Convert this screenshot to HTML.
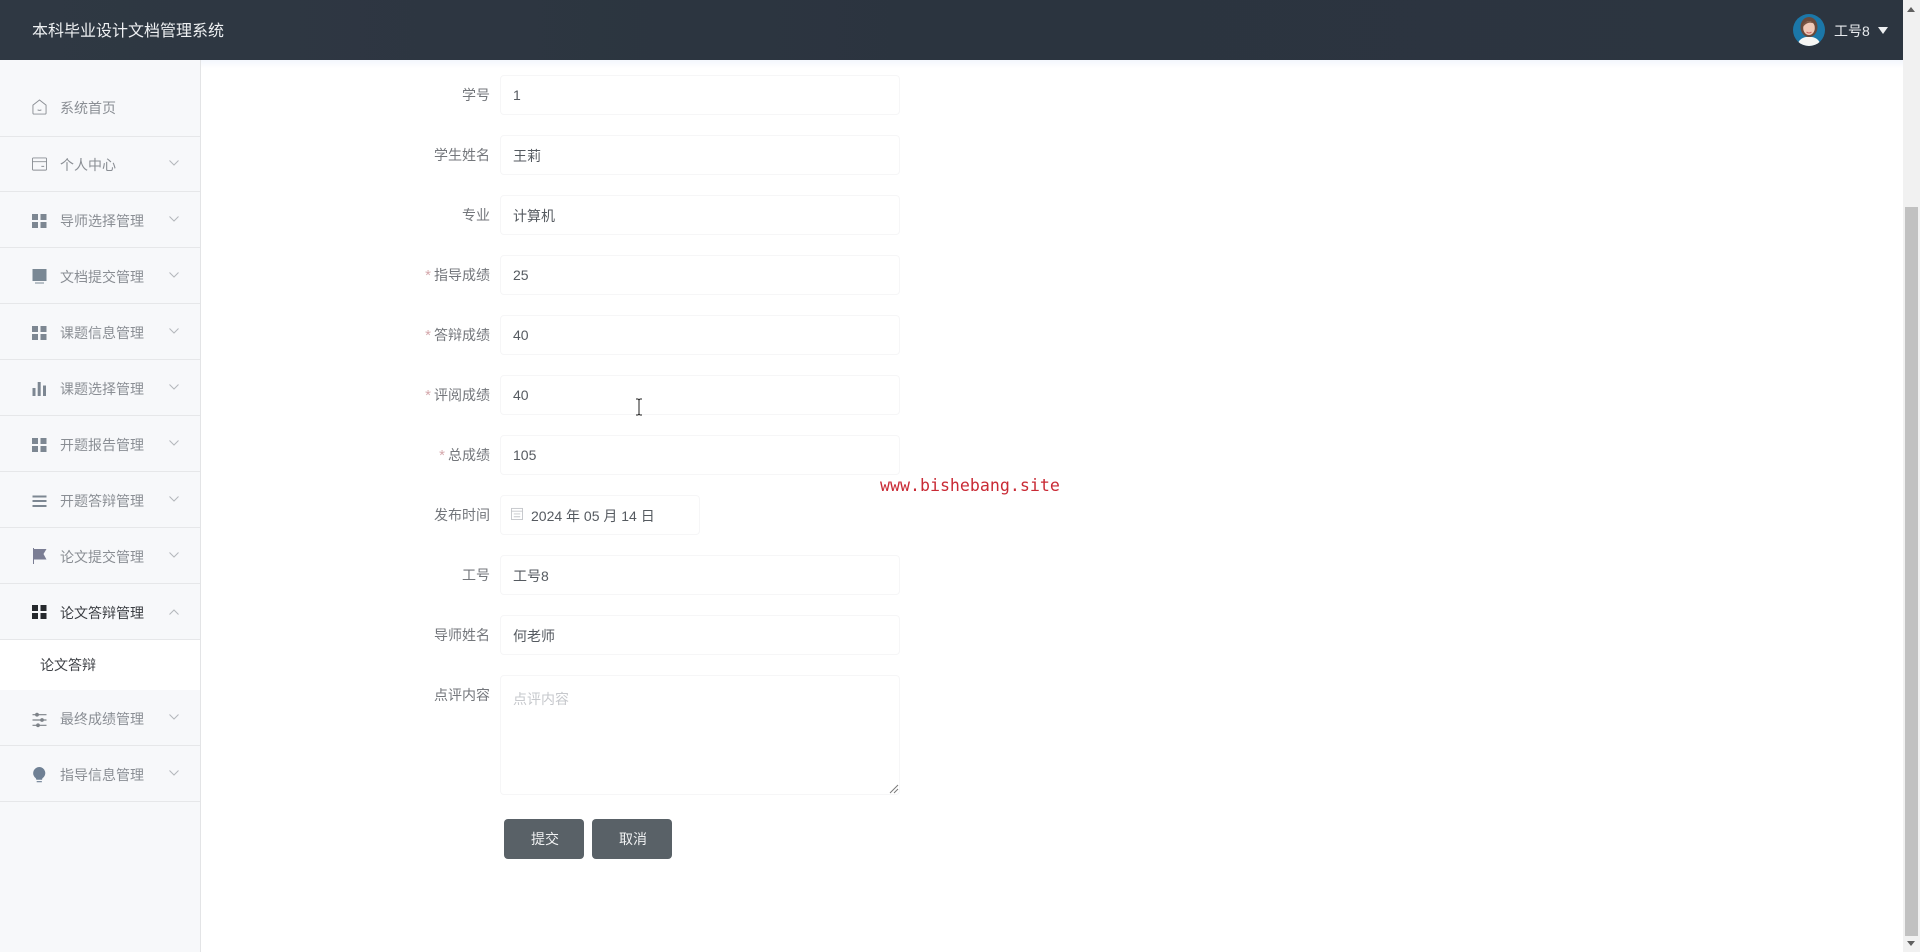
<!DOCTYPE html>
<html lang="zh-CN">
<head>
<meta charset="utf-8">
<title>本科毕业设计文档管理系统</title>
<style>
*{box-sizing:border-box;margin:0;padding:0}
html,body{width:1920px;height:952px;overflow:hidden;background:#fff;font-family:"Liberation Sans","Noto Sans CJK SC",sans-serif}
#wrap{position:absolute;left:0;top:0;width:1920px;height:952px;overflow:hidden;filter:blur(.35px)}
.a{position:absolute}
#header{left:0;top:0;width:1903px;height:60px;background:#2c3540;background:linear-gradient(90deg,#2f3843,#2b343f 50%,#2c3540)}
#title{left:32px;top:20px;font-size:16px;line-height:24px;color:#eef0f2;white-space:nowrap}
#user{left:1834px;top:21px;font-size:14px;line-height:20px;color:#e8ebee;white-space:nowrap}
#caret{left:1878px;top:27px;width:0;height:0;border-left:5.5px solid transparent;border-right:5.5px solid transparent;border-top:7px solid #eef0f2}
#shadow{left:201px;top:60px;width:1702px;height:8px;background:linear-gradient(#f3f7fd,#fff)}
#side{left:0;top:60px;width:201px;height:892px;background:#f7f8fa;border-right:1px solid #e3e4e6}
.sep{left:0;width:200px;height:1px;background:#e6e7e9}
#sub{left:0;top:640px;width:200px;height:50px;background:#fff}
.t{left:60px;font-size:14px;line-height:20px;color:#8a8e94;white-space:nowrap}
.c{left:169px;width:10px;height:6px}
.i{left:32px;width:15px;height:16px}
.lb{width:190px;left:300px;text-align:right;font-size:14px;line-height:20px;color:#73767b;white-space:nowrap}
.lb b{font-weight:400;font-size:15px;color:#d5a8ac;margin-right:3px}
.ip{left:500px;width:400px;height:40px;border:1px solid #f6f6f7;border-radius:4px;background:#fff;font-size:14px;line-height:38px;padding-left:12px;color:#555a60;white-space:nowrap}
.cn{padding-top:1px}
.btn{top:819px;width:80px;height:40px;background:#596167;border-radius:4px;color:#f0f1f2;font-size:14px;line-height:40px;text-align:center;padding-left:2px}
#wm{left:880px;top:475px;font-family:"DejaVu Sans Mono","Liberation Mono",monospace;font-size:16.6px;line-height:22px;color:#c92a35;white-space:nowrap}
#sb{left:1903px;top:0;width:17px;height:952px;background:#f1f1f1}
#thumb{left:1905px;top:207px;width:13px;height:729px;background:#c1c1c1}
</style>
</head>
<body>
<div id="wrap">
<div class="a" id="header"></div>
<div class="a" id="title">本科毕业设计文档管理系统</div>
<svg class="a" style="left:1793px;top:14px" width="32" height="32" viewBox="0 0 32 32">
  <defs><clipPath id="av"><circle cx="16" cy="16" r="16"/></clipPath></defs>
  <g clip-path="url(#av)">
    <rect width="32" height="32" fill="#1b77a8"/>
    <ellipse cx="16" cy="13" rx="8.5" ry="10" fill="#6a4a3c"/>
    <ellipse cx="16" cy="14" rx="5.8" ry="7" fill="#f0c9b8"/>
    <path d="M10 10 Q16 4 22 10 Q18 8 15 9 Q12 10 10 13Z" fill="#7a5644"/>
    <path d="M13.5 18Q16 20 18.5 18" stroke="#c9605f" fill="none"/>
    <path d="M4 32 Q6 24 13 23 L19 23 Q26 24 28 32Z" fill="#f6f6f4"/>
  </g>
</svg>
<div class="a" id="user">工号8</div>
<div class="a" id="caret"></div>
<div class="a" id="shadow"></div>

<div class="a" id="side"></div>
<div class="a" id="sub"></div>
<div class="a sep" style="top:136px"></div>
<div class="a sep" style="top:191px"></div>
<div class="a sep" style="top:247px"></div>
<div class="a sep" style="top:303px"></div>
<div class="a sep" style="top:359px"></div>
<div class="a sep" style="top:415px"></div>
<div class="a sep" style="top:471px"></div>
<div class="a sep" style="top:527px"></div>
<div class="a sep" style="top:583px"></div>
<div class="a sep" style="top:639px"></div>
<div class="a sep" style="top:745px"></div>
<div class="a sep" style="top:801px"></div>

<div class="a t" style="top:98px">系统首页</div>
<div class="a t" style="top:155px">个人中心</div>
<div class="a t" style="top:211px">导师选择管理</div>
<div class="a t" style="top:267px">文档提交管理</div>
<div class="a t" style="top:323px">课题信息管理</div>
<div class="a t" style="top:379px">课题选择管理</div>
<div class="a t" style="top:435px">开题报告管理</div>
<div class="a t" style="top:491px">开题答辩管理</div>
<div class="a t" style="top:547px">论文提交管理</div>
<div class="a t" style="top:603px;color:#3a3d42">论文答辩管理</div>
<div class="a t" style="top:655px;left:40px;color:#3f4247">论文答辩</div>
<div class="a t" style="top:709px">最终成绩管理</div>
<div class="a t" style="top:765px">指导信息管理</div>

<svg class="a i" style="top:99px" viewBox="0 0 16 17" fill="none" stroke="#8b8f95" stroke-width="1"><path d="M1 6.5 8 1l7 5.5V15a1 1 0 0 1-1 1H2a1 1 0 0 1-1-1Z"/><path d="M6 11.5q2 1.2 4 0"/></svg>
<svg class="a i" style="top:156px" viewBox="0 0 16 16" fill="none" stroke="#8b8f95" stroke-width="1"><rect x=".5" y="1.5" width="15" height="13" rx="1"/><path d="M.5 5.5h15M10 10.5h3"/></svg>
<svg class="a i" style="top:213px" viewBox="0 0 15 15" fill="#7d8792"><rect width="6" height="6" y=".5"/><rect x="8.5" y=".5" width="6" height="6"/><rect y="8.5" width="6" height="6"/><rect x="8.5" y="8.5" width="6" height="6"/></svg>
<svg class="a i" style="top:269px" viewBox="0 0 15 16" fill="#7a8894"><rect x=".5" width="14" height="12"/><rect x="3" y="13.5" width="9" height="1"/></svg>
<svg class="a i" style="top:325px" viewBox="0 0 15 15" fill="#7d8792"><rect width="6" height="6" y=".5"/><rect x="8.5" y=".5" width="6" height="6"/><rect y="8.5" width="6" height="6"/><rect x="8.5" y="8.5" width="6" height="6"/></svg>
<svg class="a i" style="top:381px" viewBox="0 0 15 15" fill="#7d8792"><rect x=".5" y="6.5" width="3" height="8"/><rect x="5.7" y=".5" width="3" height="14"/><rect x="11" y="4" width="3" height="10.5"/></svg>
<svg class="a i" style="top:437px" viewBox="0 0 15 15" fill="#7d8792"><rect width="6" height="6" y=".5"/><rect x="8.5" y=".5" width="6" height="6"/><rect y="8.5" width="6" height="6"/><rect x="8.5" y="8.5" width="6" height="6"/></svg>
<svg class="a i" style="top:493px" viewBox="0 0 15 15" fill="#7d8792"><rect x=".5" y="2" width="14" height="2"/><rect x=".5" y="6.5" width="14" height="2"/><rect x=".5" y="11.5" width="14" height="2"/></svg>
<svg class="a i" style="top:548px" viewBox="0 0 15 16" fill="#7b7e94"><rect x="1" y="0" width="1" height="16"/><path d="M2 1h12.5l-3 5 3 5.5H2Z"/></svg>
<svg class="a i" style="top:604px" viewBox="0 0 15 15" fill="#26292d"><rect width="6" height="6" y=".5"/><rect x="8.5" y=".5" width="6" height="6"/><rect y="8.5" width="6" height="6"/><rect x="8.5" y="8.5" width="6" height="6"/></svg>
<svg class="a i" style="top:712px" viewBox="0 0 15 15" fill="none" stroke="#7d8288" stroke-width="1.2"><path d="M.5 2.2h14M.5 7.5h14M.5 12.8h14"/><circle cx="5" cy="2.2" r="1.3" fill="#7d8288"/><circle cx="10" cy="7.5" r="1.3" fill="#7d8288"/><circle cx="6" cy="12.8" r="1.3" fill="#7d8288"/></svg>
<svg class="a i" style="top:767px" viewBox="0 0 15 17" fill="#6f8094"><path d="M7 0a6.5 6.5 0 0 1 3.6 12l-.4 1.5H4.2L3.6 12A6.6 6.6 0 0 1 7 0Z"/><rect x="4.5" y="15" width="5.5" height="1.2"/></svg>

<svg class="a c" style="top:160px" viewBox="0 0 10 6" fill="none" stroke="#b4b7bb"><path d="M.5.5 5 5 9.5.5"/></svg>
<svg class="a c" style="top:216px" viewBox="0 0 10 6" fill="none" stroke="#b4b7bb"><path d="M.5.5 5 5 9.5.5"/></svg>
<svg class="a c" style="top:272px" viewBox="0 0 10 6" fill="none" stroke="#b4b7bb"><path d="M.5.5 5 5 9.5.5"/></svg>
<svg class="a c" style="top:328px" viewBox="0 0 10 6" fill="none" stroke="#b4b7bb"><path d="M.5.5 5 5 9.5.5"/></svg>
<svg class="a c" style="top:384px" viewBox="0 0 10 6" fill="none" stroke="#b4b7bb"><path d="M.5.5 5 5 9.5.5"/></svg>
<svg class="a c" style="top:440px" viewBox="0 0 10 6" fill="none" stroke="#b4b7bb"><path d="M.5.5 5 5 9.5.5"/></svg>
<svg class="a c" style="top:496px" viewBox="0 0 10 6" fill="none" stroke="#b4b7bb"><path d="M.5.5 5 5 9.5.5"/></svg>
<svg class="a c" style="top:552px" viewBox="0 0 10 6" fill="none" stroke="#b4b7bb"><path d="M.5.5 5 5 9.5.5"/></svg>
<svg class="a c" style="top:609px" viewBox="0 0 10 6" fill="none" stroke="#b4b7bb"><path d="M.5 5.5 5 1l4.5 4.5"/></svg>
<svg class="a c" style="top:714px" viewBox="0 0 10 6" fill="none" stroke="#b4b7bb"><path d="M.5.5 5 5 9.5.5"/></svg>
<svg class="a c" style="top:770px" viewBox="0 0 10 6" fill="none" stroke="#b4b7bb"><path d="M.5.5 5 5 9.5.5"/></svg>

<div class="a lb" style="top:85px">学号</div>
<div class="a ip" style="top:75px">1</div>
<div class="a lb" style="top:145px">学生姓名</div>
<div class="a ip cn" style="top:135px">王莉</div>
<div class="a lb" style="top:205px">专业</div>
<div class="a ip cn" style="top:195px">计算机</div>
<div class="a lb" style="top:265px"><b>*</b>指导成绩</div>
<div class="a ip" style="top:255px">25</div>
<div class="a lb" style="top:325px"><b>*</b>答辩成绩</div>
<div class="a ip" style="top:315px">40</div>
<div class="a lb" style="top:385px"><b>*</b>评阅成绩</div>
<div class="a ip" style="top:375px">40</div>
<div class="a lb" style="top:445px"><b>*</b>总成绩</div>
<div class="a ip" style="top:435px">105</div>
<div class="a lb" style="top:505px">发布时间</div>
<div class="a ip" style="top:495px;width:200px;padding-left:30px;line-height:40px">2024 年 05 月 14 日</div>
<svg class="a" style="left:511px;top:507px" width="12" height="13" viewBox="0 0 13 14" fill="none" stroke="#c4c6ca"><rect x=".5" y="1.5" width="12" height="12"/><path d="M.5 4.5h12M3 7.5h7M3 10.5h7"/></svg>
<div class="a lb" style="top:565px">工号</div>
<div class="a ip cn" style="top:555px">工号8</div>
<div class="a lb" style="top:625px">导师姓名</div>
<div class="a ip cn" style="top:615px">何老师</div>
<div class="a lb" style="top:685px">点评内容</div>
<div class="a ip" style="top:675px;height:120px;line-height:20px;padding-top:13px;color:#c6c8cc">点评内容</div>
<svg class="a" style="left:889px;top:784px" width="10" height="10" viewBox="0 0 10 10" stroke="#7a7a7a" fill="none"><path d="M1 9 9 1M5 9 9 5"/></svg>
<div class="a btn" style="left:504px">提交</div>
<div class="a btn" style="left:592px">取消</div>

<div class="a" id="wm">www.bishebang.site</div>
<svg class="a" style="left:634px;top:398px" width="10" height="18" viewBox="0 0 10 18" fill="none" stroke="#222"><path d="M2 1h2l1 1 1-1h2M5 2v14M2 17h2l1-1 1 1h2"/></svg>

<div class="a" id="sb"></div>
<div class="a" id="thumb"></div>
<div class="a" style="left:1907px;top:7px;width:0;height:0;border-left:4px solid transparent;border-right:4px solid transparent;border-bottom:5px solid #606060"></div>
<div class="a" style="left:1907px;top:941px;width:0;height:0;border-left:4px solid transparent;border-right:4px solid transparent;border-top:5px solid #606060"></div>
</div>
</body>
</html>
